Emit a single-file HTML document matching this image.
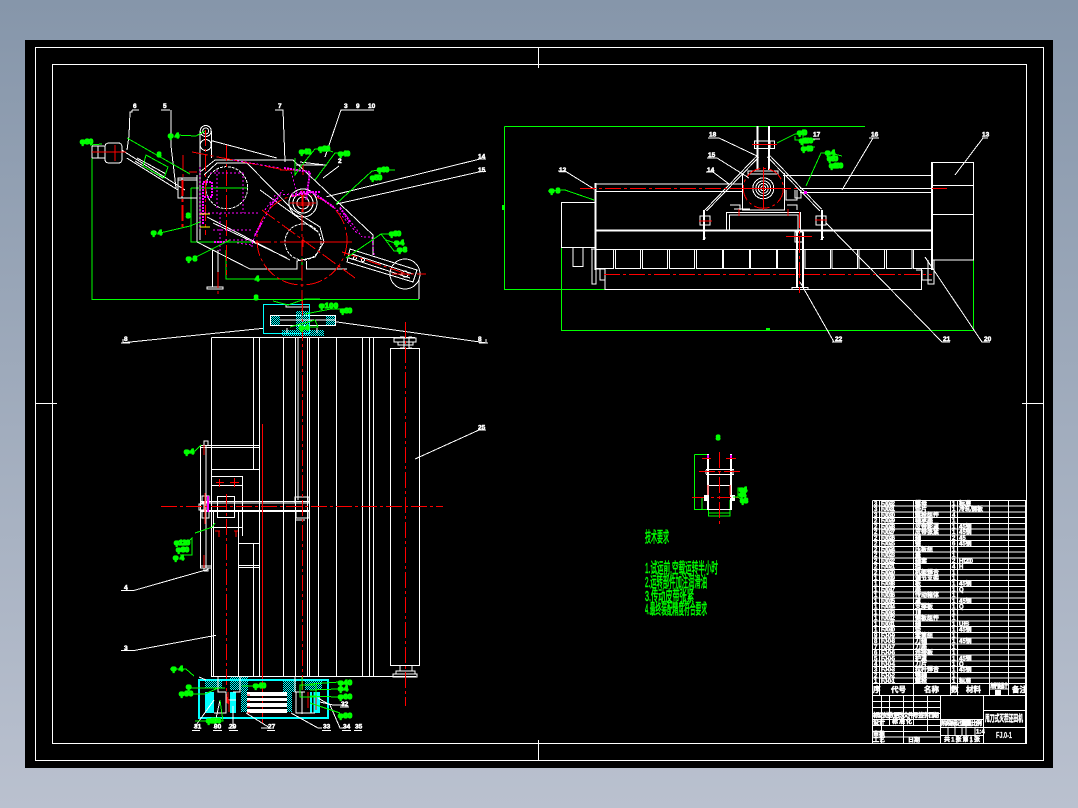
<!DOCTYPE html>
<html><head><meta charset="utf-8"><style>
html,body{margin:0;padding:0;width:1078px;height:808px;overflow:hidden;background:#9aa6ba}
svg{display:block}
svg *{shape-rendering:crispEdges}
.w{fill:none;stroke:#fff;stroke-width:1}
.t{fill:none;stroke:#fff;stroke-width:2}
.d{fill:none;stroke:#fff;stroke-width:1;stroke-dasharray:3 1}
.r{fill:none;stroke:#f00;stroke-width:1;stroke-dasharray:16 3 3 3}
.rs{fill:none;stroke:#f00;stroke-width:1}
.g{fill:none;stroke:#0f0;stroke-width:1}
.m{fill:none;stroke:#f0f;stroke-width:1;stroke-dasharray:2 2}
.mt{fill:none;stroke:#f0f;stroke-width:2;stroke-dasharray:2 1}
.c{fill:none;stroke:#0ff;stroke-width:1}
.y{fill:none;stroke:#ff0;stroke-width:1}
text{font-family:"Liberation Sans","Noto Sans CJK SC",sans-serif}
.lb{fill:#fff;stroke:#fff;stroke-width:.5;font-size:6.5px;font-weight:bold}
.gl{fill:#0f0;stroke:#0f0;stroke-width:1.3;font-size:7.5px;font-weight:bold}
.tb{fill:#fff;stroke:#fff;stroke-width:.45;font-size:6px;font-weight:bold}
.tg{fill:#0f0;stroke:#0f0;stroke-width:.6;font-size:15px}
</style></head><body>
<svg width="1078" height="808" viewBox="0 0 1078 808" xmlns="http://www.w3.org/2000/svg">
<defs>
<linearGradient id="bg" x1="0" y1="0" x2="0" y2="1"><stop offset="0" stop-color="#8696aa"/><stop offset="1" stop-color="#bac1cf"/></linearGradient>
<pattern id="dz" width="2" height="2" patternUnits="userSpaceOnUse"><rect width="1" height="1" fill="#0ff"/><rect x="1" y="1" width="1" height="1" fill="#0ff"/></pattern>
</defs>
<rect width="1078" height="808" fill="url(#bg)"/>
<rect x="25" y="40" width="1028" height="728" fill="#000"/>
<g>
<rect x="35.5" y="47.5" width="1008" height="713" class="w"/>
<rect x="52.5" y="64.5" width="974" height="679" class="w"/>
<path class="w" d="M538.5 47V68M538.5 740V760M35 403.5H57M1022 403.5H1043"/>
</g>

<!-- TOP LEFT VIEW -->
<g>
<path class="g" d="M92 146V299.5H419M191 188H247M191 188V242H253M226 250V279H302V258"/>
<path class="w" d="M419 280V299M91 145H92"/>
<circle cx="205.7" cy="131" r="5.5" class="w"/><circle cx="205.7" cy="131" r="3" class="w"/>
<circle cx="205.7" cy="145" r="5.5" class="w"/>
<path class="w" d="M200 131V240M211.7 131V158M211.7 140.7L276.7 158M200 172L215 160H293L373 235V255M204 175L217 163H247L293 210L320 227L324 242L315 257L297 261V269H250L197 242M197 175V242M207 217L290 260M213 223L287 258M306.7 261V269H347M260 190L318 232"/>
<circle cx="226.7" cy="187.7" r="21" class="d"/>
<circle cx="303" cy="242" r="18" class="d"/>
<circle cx="302" cy="240" r="45" class="r"/>
<circle cx="303" cy="203" r="14" class="w"/><circle cx="303" cy="203" r="10" class="w"/><circle cx="303" cy="203" r="6" class="w"/>
<path class="w" d="M350 249L417 270L413 282L347 262ZM352 254L413 274M349 258L410 278"/>
<circle cx="405" cy="274" r="15" class="w"/><circle cx="405" cy="274" r="3" class="w"/><circle cx="355" cy="258" r="1.5" class="w"/><circle cx="363" cy="260" r="1.5" class="w"/>
<path class="w" d="M326.7 196.7L480 159H486M336.7 204L480 171.7H486"/>
<path class="w" d="M105 147Q105 143 109 143H118Q122 143 122 147V159Q122 163 118 163H109Q105 163 105 159ZM92 146H105M92 158H105M92 152H105M92 146V158M98 146V158M121.7 150L185 190M126.7 158L178 190M135 161L163 178M137 158L166 174M178 178H197V198H178ZM182 178V198M178 180H197"/>
<path class="w" d="M212.7 250V287M218 250V287M207 287H223V289H207Z"/>
<path class="rs" d="M92 152H126M115 145V161"/>
<path class="w" d="M132 110V112H130L129 136L127 150M171 110L171 146L176 188M277 110H283L285 162M342 110H341L325 157"/>
<path class="w" d="M132 110H139M161 110H170M275 110H283M341 110H374"/>
<path class="w" d="M339 166L323 178M296 165H327M300 162L325 165"/>
<path class="r" d="M226.7 145V275M290 242H350M192 152L290 171M205.7 130V235M183 155V230M182 180V230M302 190V320M262 210L355 278M218 272V296"/>
<path class="r" d="M255 242H352M392 274H426M296 205H312M342 252L410 275"/>
<path class="rs" d="M189 172L197 172M280 170H300M303 165V175M290 203H316M303 195V212M300 242H307M303 237V247"/>
<path class="mt" d="M203 182H212V197H203ZM203 198V225M284 168L310 172L306 200M292 196L312 192L335 208"/>
<path class="m" d="M233 160L280 168M210 173H243V213M200 213H260M200 167V230M220 213V253M213 230H252M237 243L252 245L255 235L273 203L280 195L313 192L337 210L357 233M275 200L283 190M265 210L276 194M340 207L362 237M364 237H372L374 255M290 168L297 193M217 170V208M225 240H252V248"/>
<path class="mt" d="M270 205L278 198M340 208L350 222M255 235L262 222M300 192H320M214 242H225"/>
<path class="y" d="M200 214H210M200 227H210"/>
<path class="g" d="M176 135L196 136L205 131M127 138L190 174M146 155L168 167L164 178L143 166ZM90 145L102 144M160 233L190 226L200 222M190 260L230 240M346 258L381 234H390M381 234L394 251H400M386 240L395 243M336 204L372 171L380 170H395M295 158V175L302 165L315 149H330M318 149H325L333 152M315 180L335 153H350"/>
<text class="gl" x="80" y="144" textLength="13">φ80</text>
<text class="gl" x="168" y="138" textLength="11">φ4</text>
<text class="gl" x="151" y="235" textLength="11">φ4</text>
<text class="gl" x="186" y="261" textLength="11">φ8</text>
<text class="gl" x="186" y="218">8</text>
<text class="gl" x="299" y="154" textLength="12">φ40</text>
<text class="gl" x="318" y="151" textLength="12">φ20</text>
<text class="gl" x="338" y="156" textLength="12">φ40</text>
<text class="gl" x="377" y="172" textLength="12">φ60</text>
<text class="gl" x="370" y="180" textLength="12">φ50</text>
<text class="gl" x="389" y="236" textLength="12">φ30</text>
<text class="gl" x="394" y="245" textLength="10">φ4</text>
<text class="gl" x="397" y="252" textLength="10">φ8</text>
<text class="gl" x="255" y="281">4</text><text class="gl" x="254" y="300">8</text><text class="gl" x="157" y="157">8</text>
<text class="lb" x="133" y="108">6</text><text class="lb" x="163" y="108">5</text><text class="lb" x="278" y="108">7</text><text class="lb" x="344" y="108">3</text><text class="lb" x="356" y="108">9</text><text class="lb" x="368" y="108">10</text><text class="lb" x="338" y="163">2</text><text class="lb" x="478" y="158.5">14</text><text class="lb" x="478" y="172">15</text>
</g>

<!-- TOP RIGHT VIEW -->
<g>
<path class="g" d="M504.5 126.5H865M504.5 126.5V289.5H605M561.7 247V330.5H973.5V260"/>
<rect x="502" y="205" width="2" height="5" fill="#0f0"/><rect x="766" y="328" width="4" height="2" fill="#0f0"/>
<path class="t" d="M595.5 183V270M595 230.7H932M932 162V270"/>
<path class="w" d="M932.5 162.5H973.5V260H932M932 185.3H973.5M932 214.3H973.5M595 184H742M595 191.7H742M783 175.3H932M800 188.3H932M800 192.7H932M561.7 202.3H595V247.3H561.7ZM573 247V266.7H583V247M595 249.3H932M605 268.7V289.3H921.7V268.7"/>
<path class="w" d="M595.500 249.300V268.700H613.700V249.300M615.300 249.300H640.700V268.700H615.300ZM642.300 249.300H667.700V268.700H642.300ZM669.300 249.300H694.700V268.700H669.300ZM696.300 249.300H722.300V268.700H696.300ZM723.300 249.300H749.300V268.700H723.300ZM750.300 249.300H776.300V268.700H750.300ZM777.300 249.300H796V268.700H777.300ZM805 249.300H830.700V268.700H805ZM832 249.300H857.700V268.700H832ZM859 249.300H884.700V268.700H859ZM886.300 249.300H912V268.700H886.300ZM913.300 249.300H932V268.700H913.300Z"/>
<path class="w" d="M591 249H595M592 249V284H596V268M596 269H605V280M600 269V280H605M916 270H922M922 270V280H932M928 260V284H934V260"/>
<path class="t" d="M797 232V288M803 232V288"/>
<path class="w" d="M792 287.500H808V289.500H792ZM795 232H803V242H795Z"/>
<path class="w" d="M726.700 230.700V212.300H800.700V230.700M729.500 230.700V215H798V230.700M742.300 173V210H784.300V173M748 174H778V171H748Z"/>
<path class="w" d="M734 209H750M730 205H740V210M787 205H797V210M786 190V200H797V190M795 190V198H801V190"/>
</g>
<path class="t" d="M757.700 126V170M769 126V170"/>
<path class="w" d="M754.300 141H774.300V148.300H754.300ZM757 141V148M770 141V148"/>
<path class="w" d="M756.700 156L705 210M758.500 157.500L706.500 211M769.300 155L821.700 209.300M767.500 157L820 211"/>
<path class="t" d="M704 210V240M822 210V240"/>
<path class="w" d="M700 216H710V225H700ZM816 216H826V225H816ZM703 240L704 238L706 238M821 240L822 236L824 238"/>
<circle cx="763.300" cy="188.300" r="20" class="r"/>
<circle cx="763.300" cy="188.300" r="10.500" class="w"/><circle cx="763.300" cy="188.300" r="7.500" class="w"/><circle cx="763.300" cy="188.300" r="5" class="w"/><circle cx="763.300" cy="188.300" r="2.500" class="w"/>
<path class="w" d="M711 138H719L757 156M710 158H717L749 178M706 172H713L729 184M561 171H565L594 189M869 138H873L842 190M983 138L955 175M832 342H834L800 282M947 342H942L826 223M987 342H982L925 257"/>
<path class="w" d="M708 138H716M707 158H717M706 172H713M558 171H566M870 138H879M982 138H988M833 342H842M942 342H950M982 342H990M802 139H820"/>
<path class="r" d="M580 188.300H752M775 188.300H800M932 188.300H947M604 274.300H932M799.500 212V293"/>
<path class="rs" d="M742 188.300H785M763.300 167V210M739 209V216M788 209V216M699 221H712M815 220H827M786 236.500H812M752 144.500H777"/>
<rect x="804" y="191" width="3" height="3" fill="#f0f"/>
<path class="g" d="M548 191L565 190L594 200M777 143L795 134H803V147L812 149M795 136V140L815 140M803 147H815M806 186L821 153H830V165H842M830 153L842 156"/>
<text class="gl" x="549" y="193" textLength="11">φ8</text>
<text class="gl" x="797" y="135" textLength="10">φ40</text><text class="gl" x="799" y="143" textLength="14">φ100</text><text class="gl" x="801" y="151" textLength="12">φ40</text>
<text class="gl" x="825" y="155" textLength="10">φ4</text><text class="gl" x="827" y="161" textLength="11">φ80</text><text class="gl" x="829" y="168" textLength="14">φ100</text>
<text class="lb" x="709" y="136.500">18</text><text class="lb" x="813" y="136.500">17</text><text class="lb" x="871" y="136.500">16</text><text class="lb" x="982" y="136.500">13</text><text class="lb" x="559" y="172">12</text><text class="lb" x="708" y="157">15</text><text class="lb" x="707" y="172">14</text><text class="lb" x="835" y="341">22</text><text class="lb" x="943" y="341">21</text><text class="lb" x="984" y="341">20</text>

<!-- MAIN PLAN VIEW -->
<g>
<path class="w" d="M211.500 337.500H415M211.500 337.500V677M253.500 337V470M259.500 337V677M283.500 337V677M295.500 337V677M298 337V500M307.500 337V677M309.500 337V677M318.500 337V677M336.500 337V677M362.500 337V677M369.500 337V677M373.500 337V677M390.500 348.500H419.500V665.500H390.500ZM400 337H404V348H400M412 337H409V348H412M394 338H416V342H394ZM398 342H413V345H398Z"/>
<path class="w" d="M200.500 446V568M206 446V568M200 445.700H259M200 447.700H259M211 469.300H259M211 476.700H242.500V536M211 485.300H242M217.500 496.700H234.500V517.700H217.500ZM200 501.700H309M200 503H309M200 510.300H309M200 511.500H309M213.700 510V677M238.500 510V677M238 543.500H259M238 565.700H259M238 567.700H259M253.500 543V677M200 566H211M200 568H211M204 445V441H208V445M204 568V571H208V568M211 527.300H242"/>
<path class="w" d="M211 676.700H416M400 666V671H412V666M396 671H415V674H396ZM393 674H417V677H393ZM199 504H204V510H199ZM202 496H209V502H202ZM202 511H209V518H202ZM295 497H309V503H295ZM296 511H309V518H296ZM295 520H305"/>
</g>
<path class="w" d="M123.300 342.700L263.300 328.300M335 321.700L485 342.700M485 430H479L415 459M123.300 590.700H133L208.300 569.300M123.300 650.700H133L216 635.300M123 339V343M486 339V343M121 343H130M479 343H488"/>
<path class="w" d="M121 590.700H131M121 650.700H131M127 587V591M127 647V651M478 430H486"/>
<g>
<rect x="263.500" y="304.500" width="46" height="29" class="c"/>
<rect x="270.500" y="315.500" width="65" height="10" class="w"/>
<path fill="url(#dz)" d="M271 316H280V325H271ZM326 316H335V325H326ZM296 311H310V336H296ZM282 330H296V336H282ZM310 330H324V336H310Z"/>
<path class="w" d="M280 320H335M287 328V333M317 328V333M286 304V307H309"/>
<path class="r" d="M405.300 322V706M302.300 300V690M161 506.300H443M226.300 494V700"/>
<path class="rs" d="M262.500 424V723M205 493V524M204 445V455M204 555V568"/>
<path class="rs" d="M216 482.500H224M219.500 479V487M230 482.500H239M234.500 478V487M219 531V537M236 531V537M215 531H220M234 531H238"/>
<rect x="207" y="496" width="2" height="16" fill="#f0f"/>
<rect x="199.500" y="680.500" width="128" height="37" class="c"/>
<rect x="198.500" y="679.500" width="130" height="39" class="c"/>
<path d="M247 692H287V696H247ZM247 698H287V701H247ZM247 703H287V707H247ZM247 709H287V713H247Z" fill="#fff"/>
<path fill="#0ff" d="M205 692H214V713H205ZM230 692H236V713H230ZM310 692H312V713H310ZM313.500 692H320V713H313.500Z"/>
<path fill="url(#dz)" d="M205 680H222V688H205ZM230 677H248V690H230ZM283 680H296V692H283ZM305 680H322V690H305ZM241 690H247V712H241ZM287 690H292V712H287Z"/>
<path class="w" d="M218 677V692H226V713H214M240 677V692H233M295 677V692H305M296 692V713H315M296 713V692M302 692V714M226 700H236"/>
<path class="rs" d="M247 695H250M247 701H250M247 707H250M247 713H250M227 697V703M229 700V712M228 692V704M308 692V708M316 696V710"/>
<path class="g" d="M300 685H316V697H300ZM302 677V690"/>
</g>
<path class="w" d="M194 728L214 700M214 728L220 700M228 728H233L233 706M261 728H270L246 713M322 728H318L291 713M345 728H340L330 705L318 698M344 705H333L320 702M199 677L206 680"/>
<path class="w" d="M192 730.500H200M213 730.500H222M229 730.500H238M267 730.500H275M322 730.500H331M342 730.500H351M354 730.500H362M340 707H349"/>
<path class="g" d="M273 301L288 305L305 299H320M305 314L331 309H345M290 327L315 320L318 327H305M184 451H195L201 445M195 533L212 527.300L215 523M190 542H188L192 538V555H180M170 669H186L194 676M186 688H225M186 694H205L218 688M242 686H256M310 684L340 682M310 690L338 689M310 696L338 697M310 703L340 713M220 700L223 721H195"/>
<text class="gl" x="319" y="308" textLength="19">φ100</text><text class="gl" x="340" y="313" textLength="12">φ80</text>
<text class="gl" x="299" y="330" textLength="10">φ4</text>
<text class="gl" x="184" y="454" textLength="10">φ4</text>
<text class="gl" x="174" y="545" textLength="16">φ120</text><text class="gl" x="176" y="552" textLength="13">φ80</text><text class="gl" x="173" y="560" textLength="11">φ4</text>
<text class="gl" x="171" y="671" textLength="12">φ4</text>
<text class="gl" x="186" y="689" textLength="10">φ</text><text class="gl" x="179" y="696" textLength="14">φ80</text>
<text class="gl" x="253" y="688" textLength="13">φ40</text>
<text class="gl" x="338" y="685" textLength="14">φ40</text><text class="gl" x="338" y="691" textLength="10">φ4</text><text class="gl" x="338" y="699" textLength="14">φ60</text><text class="gl" x="338" y="718" textLength="14">φ80</text>
<text class="gl" x="206" y="723" textLength="15">φ100</text>
<text class="lb" x="194" y="728.500">31</text><text class="lb" x="214" y="728.500">30</text><text class="lb" x="229" y="728.500">29</text><text class="lb" x="268" y="728.500">27</text><text class="lb" x="323" y="728.500">33</text><text class="lb" x="343" y="728.500">34</text><text class="lb" x="355" y="728.500">35</text><text class="lb" x="341" y="706">32</text>
<text class="lb" x="124" y="341">8</text><text class="lb" x="478" y="341">8</text><text class="lb" x="478" y="429.500">25</text><text class="lb" x="124" y="589.500">4</text><text class="lb" x="124" y="650">3</text>

<!-- SMALL VIEW -->
<g>
<path class="g" d="M694.500 454.500H708.500M694.500 454.500V509.500H708.500M702 497V509M708.500 500V516H730V500M708.500 513H730"/>
<path class="t" d="M708 454V510M731 454V510"/>
<path class="w" d="M706 469.500H734M706 474.500H734M709 485.500H730M709 509.500H730M706 470V474M733 470V474"/>
<path class="r" d="M719.500 452V525M699 471.500H740M692 497.500H738"/>
<path class="rs" d="M702 458.500H711M726 458.500H736M708 485V495M730 485V495"/>
<path fill="#fff" d="M704 495H708V501H704ZM731 495H735V501H731Z"/>
<path fill="#f0f" d="M707 455H709V458H707ZM730 455H732V458H730Z"/>
<path class="g" d="M733 497H738V488H742M738 494H742M738 497L742 500"/>
</g>
<text class="gl" x="716" y="440">8</text><text class="gl" x="739" y="492" textLength="8">φ4</text><text class="gl" x="739" y="497" textLength="7">φ4</text><text class="gl" x="740" y="503" textLength="8">φ8</text>

<!-- TECH TEXT -->
<text class="tg" x="645" y="542" textLength="24" lengthAdjust="spacingAndGlyphs">技术要求</text>
<text class="tg" x="645" y="573" textLength="73" lengthAdjust="spacingAndGlyphs">1.试运前,空载运转半小时</text>
<text class="tg" x="645" y="587" textLength="62" lengthAdjust="spacingAndGlyphs">2.运转部件加注润滑油</text>
<text class="tg" x="645" y="601" textLength="49" lengthAdjust="spacingAndGlyphs">3.传动皮带张紧</text>
<text class="tg" x="645" y="614" textLength="62" lengthAdjust="spacingAndGlyphs">4.最终装配精度符合要求</text>

<!-- TITLE BLOCK -->
<g>
<path class="w" d="M872.500 500.500H1025.500V743.500M872.500 500.500V743.500H1025.500"/>
<path class="w" d="M872 506.200H1025M872 512H1025M872 517.700H1025M872 523.400H1025M872 529.200H1025M872 534.900H1025M872 540.600H1025M872 546.400H1025M872 552.100H1025M872 557.800H1025M872 563.500H1025M872 569.300H1025M872 575H1025M872 580.700H1025M872 586.500H1025M872 592.200H1025M872 597.900H1025M872 603.700H1025M872 609.400H1025M872 615.100H1025M872 620.900H1025M872 626.600H1025M872 632.300H1025M872 638H1025M872 643.800H1025M872 649.500H1025M872 655.200H1025M872 661H1025M872 666.700H1025M872 672.400H1025M872 678.100H1025M872 683.500H1025M872 695.500H1025"/>
<path class="w" d="M879.500 500V695M913.500 500V695M950.500 500V695M957.500 500V695M989.500 500V695M1008.500 500V695M989 689H1008"/>
<path class="w" d="M872 701.500H940M872 707.500H940M872 713.500H940M872 719.500H940M872 725.500H940M872 731.500H940M872 737H940M881.500 695V743M889.500 695V725M903.500 695V743M913.500 695V725M927.500 695V731M940.500 695V743M983.500 695V743M983 710.500H1025M983 727.500H1025M940 719.500H983M940 727.500H983M940 735.500H983M955 719V735M966 719V735M975 727V735M948 727V735M962 727V735M957 735V743M971 735V743"/>
</g>
<g class="tb">
<text x="874" y="505.500">3</text><text x="881" y="505.500" textLength="14">FJ-0-32</text><text x="915" y="505.500">螺母</text><text x="952" y="505.500">1</text><text x="959" y="505.500">标准</text>
<text x="874" y="511.200">3</text><text x="881" y="511.200" textLength="14">FJ-0-31</text><text x="915" y="511.200">垫片</text><text x="952" y="511.200">1</text><text x="959" y="511.200">冷轧钢板</text>
<text x="874" y="517">3</text><text x="881" y="517" textLength="14">FJ-0-30</text><text x="915" y="517">螺栓组件</text><text x="952" y="517">4</text>
<text x="874" y="522.700">2</text><text x="881" y="522.700" textLength="14">FJ-0-29</text><text x="915" y="522.700">轴承座</text><text x="952" y="522.700">1</text>
<text x="874" y="528.400">2</text><text x="881" y="528.400" textLength="14">FJ-0-28</text><text x="915" y="528.400">皮带轮罩</text><text x="952" y="528.400">1</text><text x="959" y="528.400">45钢</text>
<text x="874" y="534.200">2</text><text x="881" y="534.200" textLength="14">FJ-0-27</text><text x="915" y="534.200">皮带张紧</text><text x="952" y="534.200">1</text><text x="959" y="534.200">45钢</text>
<text x="874" y="539.900">2</text><text x="881" y="539.900" textLength="14">FJ-0-26</text><text x="915" y="539.900">轴</text><text x="952" y="539.900">2</text><text x="959" y="539.900">45</text>
<text x="874" y="545.600">2</text><text x="881" y="545.600" textLength="14">FJ-0-25</text><text x="915" y="545.600">键</text><text x="952" y="545.600">6</text><text x="959" y="545.600">45钢</text>
<text x="874" y="551.400">2</text><text x="881" y="551.400" textLength="14">FJ-0-24</text><text x="915" y="551.400">压板组</text><text x="952" y="551.400">1</text>
<text x="874" y="557.100">2</text><text x="881" y="557.100" textLength="14">FJ-0-23</text><text x="915" y="557.100">盖</text><text x="952" y="557.100">1</text>
<text x="874" y="562.800">2</text><text x="881" y="562.800" textLength="14">FJ-0-22</text><text x="915" y="562.800">轴套</text><text x="952" y="562.800">2</text><text x="959" y="562.800" textLength="14">HT200</text>
<text x="874" y="568.600">2</text><text x="881" y="568.600" textLength="14">FJ-0-21</text><text x="915" y="568.600">挡</text><text x="952" y="568.600">4</text><text x="959" y="568.600">H</text>
<text x="874" y="574.300">2</text><text x="881" y="574.300" textLength="14">FJ-0-20</text><text x="915" y="574.300">机架焊合</text><text x="952" y="574.300">1</text>
<text x="874" y="580">1</text><text x="881" y="580" textLength="14">FJ-0-19</text><text x="915" y="580">调节支架</text><text x="952" y="580">1</text>
<text x="874" y="585.700">1</text><text x="881" y="585.700" textLength="14">FJ-0-18</text><text x="915" y="585.700">板</text><text x="952" y="585.700">1</text><text x="959" y="585.700">45钢</text>
<text x="874" y="591.500">1</text><text x="881" y="591.500" textLength="14">FJ-0-17</text><text x="915" y="591.500">座</text><text x="952" y="591.500">1</text><text x="959" y="591.500">Q</text>
<text x="874" y="597.200">1</text><text x="881" y="597.200" textLength="14">FJ-0-16</text><text x="915" y="597.200">传动箱体</text><text x="952" y="597.200">1</text>
<text x="874" y="603">1</text><text x="881" y="603" textLength="14">FJ-0-15</text><text x="915" y="603">罩</text><text x="952" y="603">1</text><text x="959" y="603">45钢</text>
<text x="874" y="608.700">1</text><text x="881" y="608.700" textLength="14">FJ-0-14</text><text x="915" y="608.700">支撑板</text><text x="952" y="608.700">1</text><text x="959" y="608.700">Q</text>
<text x="874" y="614.400">1</text><text x="881" y="614.400" textLength="14">FJ-0-13</text><text x="915" y="614.400">顶</text><text x="952" y="614.400">1</text>
<text x="874" y="620.200">1</text><text x="881" y="620.200" textLength="14">FJ-0-12</text><text x="915" y="620.200">侧板组件</text><text x="952" y="620.200">1</text>
<text x="874" y="625.900">1</text><text x="881" y="625.900" textLength="14">FJ-0-11</text><text x="915" y="625.900">轴</text><text x="952" y="625.900">1</text><text x="959" y="625.900">U形</text>
<text x="874" y="631.600">1</text><text x="881" y="631.600" textLength="14">FJ-0-10</text><text x="915" y="631.600">垫</text><text x="952" y="631.600">1</text><text x="959" y="631.600">45钢</text>
<text x="874" y="637.300">9</text><text x="881" y="637.300" textLength="14">FJ-0-9</text><text x="915" y="637.300">套筒组</text><text x="952" y="637.300">1</text>
<text x="874" y="643.100">8</text><text x="881" y="643.100" textLength="14">FJ-0-8</text><text x="915" y="643.100">刀轴</text><text x="952" y="643.100">1</text><text x="959" y="643.100">45钢</text>
<text x="874" y="648.800">7</text><text x="881" y="648.800" textLength="14">FJ-0-7</text><text x="915" y="648.800">刀座</text><text x="952" y="648.800">1</text>
<text x="874" y="654.500">6</text><text x="881" y="654.500" textLength="14">FJ-0-6</text><text x="915" y="654.500">连接板</text><text x="952" y="654.500">1</text>
<text x="874" y="660.300">5</text><text x="881" y="660.300" textLength="14">FJ-0-5</text><text x="915" y="660.300">护罩</text><text x="952" y="660.300">1</text><text x="959" y="660.300">45钢</text>
<text x="874" y="666">4</text><text x="881" y="666" textLength="14">FJ-0-4</text><text x="915" y="666">刀片</text><text x="952" y="666">1</text><text x="959" y="666">Q</text>
<text x="874" y="671.700">3</text><text x="881" y="671.700" textLength="14">FJ-0-3</text><text x="915" y="671.700">拉杆焊合</text><text x="952" y="671.700">1</text><text x="959" y="671.700">45钢</text>
<text x="874" y="677.400">2</text><text x="881" y="677.400" textLength="14">FJ-0-2</text><text x="915" y="677.400">销轴</text><text x="952" y="677.400">1</text>
<text x="874" y="682.800">1</text><text x="881" y="682.800" textLength="14">FJ-0-1</text><text x="915" y="682.800">螺栓</text><text x="952" y="682.800">1</text><text x="959" y="682.800">标准</text>
</g>
<g class="tb" style="font-size:7.500px">
<text x="873" y="692">序</text><text x="891" y="692">代号</text><text x="924" y="692">名称</text><text x="951" y="692">数</text><text x="966" y="692">材料</text><text x="1012" y="692">备注</text>
</g>
<g class="tb">
<text x="990" y="688" textLength="18">单件 总计</text><rect x="995" y="690" width="6" height="5" fill="#fff" stroke="none"/>
<text x="873" y="717.500" textLength="66">标记 处数 更改文件号 签字 日期</text>
<text x="873" y="724.500">设计</text><text x="892" y="723.500" textLength="20">标准化</text>
<text x="873" y="736">审核</text><text x="873" y="742">工艺</text><text x="908" y="742">日期</text>
<text x="941" y="725.500" textLength="41">阶段标记 重量 比例</text><text x="976" y="733.500">1:4</text>
<text x="944" y="741.500" textLength="36">共 1 张 第 1 张</text>
</g>
<text x="985" y="721.500" textLength="38" lengthAdjust="spacingAndGlyphs" style="fill:#fff;stroke:#fff;stroke-width:.5;font-size:9px;font-weight:bold">甩刀式灭茬还田机</text>
<text x="996" y="738" textLength="16" lengthAdjust="spacingAndGlyphs" style="fill:#fff;stroke:#fff;stroke-width:.2;font-size:8px;font-weight:bold">FJ.0-1</text>
</svg>
</body></html>
